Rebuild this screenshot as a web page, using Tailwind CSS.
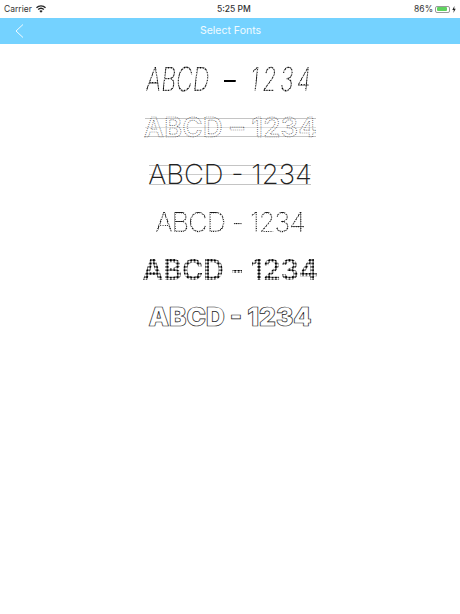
<!DOCTYPE html>
<html lang="en">
<head>
  <meta charset="UTF-8">
  <meta name="viewport" content="width=device-width, initial-scale=1.0">
  <title>Select Fonts</title>
  <script src="https://cdn.jsdelivr.net/npm/@tailwindcss/browser@4"></script>
</head>
<body class="bg-white">
  <div class="w-[460px] h-[614px] bg-white font-['Inter',sans-serif] overflow-hidden">

    <!-- status bar -->
    <div class="h-[18px] flex items-center justify-between pl-[4px] pr-[4px] text-[8.5px] text-[#333] relative">
      <div class="flex items-center gap-[4px]">
        <span>Carrier</span>
        <svg width="10" height="8" viewBox="0 0 20 15" fill="#222">
          <path d="M10 15 L6.8 11.4 A4.6 4.6 0 0 1 13.2 11.4 Z"/>
          <path d="M5.2 9.6 L3.4 7.6 A9.6 9.6 0 0 1 16.6 7.6 L14.8 9.6 A7 7 0 0 0 5.2 9.6 Z"/>
          <path d="M1.9 5.9 L0 3.9 A14.4 14.4 0 0 1 20 3.9 L18.1 5.9 A11.8 11.8 0 0 0 1.9 5.9 Z"/>
        </svg>
      </div>
      <span class="absolute left-[217px] font-medium">5:25 PM</span>
      <div class="flex items-center gap-[2px]">
        <span>86%</span>
        <div class="w-[15px] h-[7px] border border-[#999] rounded-[2px] p-[0.5px]">
          <div class="h-full w-[86%] bg-[#5fd35f] rounded-[1px]"></div>
        </div>
        <svg width="4" height="7" viewBox="0 0 4 7" fill="#222"><path d="M2.4 0 L0.3 4 H1.8 L1.4 7 L3.7 2.8 H2.2 Z"/></svg>
      </div>
    </div>

    <!-- nav bar -->
    <div class="h-[26px] bg-[#74d2ff] flex items-center justify-center relative">
      <svg class="absolute left-[15px] top-[6px]" width="9" height="14" viewBox="0 0 9 14" fill="none" stroke="#fff" stroke-width="0.9">
        <path d="M8 0.5 L1 7 L8 13.5"/>
      </svg>
      <span class="text-[10.5px] text-white/90 ml-[1px]">Select Fonts</span>
    </div>

    <!-- font list -->
    <div class="flex flex-col items-center pt-[12px]">

      <div class="h-[47.5px] flex items-center">
        <span class="scale-x-[0.7] text-[33px] leading-none font-extralight italic whitespace-nowrap text-transparent bg-clip-text bg-[radial-gradient(ellipse_closest-side,#000_75%,transparent_100%)] bg-[length:3.8px_2.7px]">ABCD<span class="mx-[21px] text-black font-light not-italic">–</span><span class="tracking-[4.5px]">1234</span></span>
      </div>

      <div class="h-[47.5px] flex items-center">
        <div class="relative w-[171px] h-[19px] border-y border-[#c4c4c4] flex items-center justify-center">
          <div class="absolute left-0 right-0 top-[8px] h-px bg-[#ddd]"></div>
          <svg class="relative shrink-0 overflow-visible" width="171" height="30" viewBox="0 0 171 30">
            <text x="85.5" y="25" text-anchor="middle" font-size="27" font-weight="600" letter-spacing="0.5" fill="none" stroke="#444" stroke-width="0.7" stroke-dasharray="1 1.1">ABCD – 1234</text>
          </svg>
        </div>
      </div>

      <div class="h-[47.5px] flex items-center">
        <div class="relative w-[162px] h-[20px] border-y border-[#c4c4c4] flex items-center justify-center">
          <div class="absolute left-0 right-0 top-[8px] h-px bg-[#ccc]"></div>
          <span class="relative text-[27.5px] leading-none font-extralight whitespace-nowrap text-[#222]">ABCD - 1234</span>
        </div>
      </div>

      <div class="h-[47.5px] flex items-center">
        <span class="text-[27px] leading-none font-extralight tracking-[-1px] whitespace-nowrap text-transparent bg-clip-text bg-[radial-gradient(circle,#111_0.8px,transparent_1.1px)] bg-[length:2.3px_2.3px]">ABCD - 1234</span>
      </div>

      <div class="h-[47.5px] flex items-center">
        <span class="text-[29px] leading-none font-semibold tracking-[-0.3px] whitespace-nowrap text-transparent bg-clip-text bg-[radial-gradient(circle,#000_1.2px,transparent_1.5px)] bg-[length:3.4px_3.4px]">ABCD - 1234</span>
      </div>

      <div class="h-[47.5px] flex items-center">
        <span class="text-[26px] leading-none font-black whitespace-nowrap text-white [-webkit-text-stroke:0.7px_#222]">ABCD - 1234</span>
      </div>

    </div>
  </div>
</body>
</html>
